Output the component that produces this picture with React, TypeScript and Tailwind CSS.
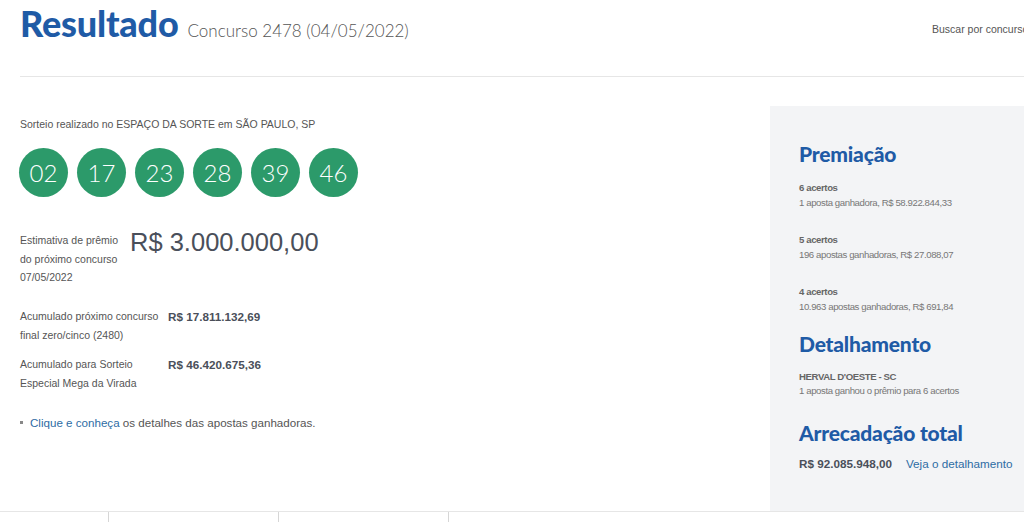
import React from 'react';

const numbers = ['02', '17', '23', '28', '39', '46'];

const faixas = [
  { titulo: '6 acertos', texto: '1 aposta ganhadora, R$ 58.922.844,33' },
  { titulo: '5 acertos', texto: '196 apostas ganhadoras, R$ 27.088,07' },
  { titulo: '4 acertos', texto: '10.963 apostas ganhadoras, R$ 691,84' },
];

const heading = "font-['Lato',sans-serif] font-black text-[#1f5ba6] tracking-[-0.2px]";

export default function App() {
  return (
    <div className="w-[1024px] h-[522px] overflow-hidden bg-white font-['Liberation_Sans',Arial,sans-serif] text-[#555]">
      {/* Header */}
      <div className="ml-[20px] h-[77px] border-b border-[#e6e6e6] flex items-start justify-between">
        <div className="flex items-baseline gap-[9px] pt-[1px]">
          <h1 className={`${heading} text-[36px] leading-[44px]`}>Resultado</h1>
          <span className="font-['Lato',sans-serif] font-light text-[17px] text-[#555]">
            Concurso 2478 (04/05/2022)
          </span>
        </div>
        <div className="pt-[22px] w-[92px] overflow-hidden whitespace-nowrap text-[10.5px] text-[#555]">
          Buscar por concurso
        </div>
      </div>

      {/* Main */}
      <div className="flex h-[434px]">
        <div className="flex-1 pl-[19px] pt-[40px]">
          <p className="pl-[1px] text-[10.5px] leading-[14px]">
            Sorteio realizado no ESPAÇO DA SORTE em SÃO PAULO, SP
          </p>
          <ul className="flex gap-[9px] mt-[17px]">
            {numbers.map((n) => (
              <li
                key={n}
                className="w-[49px] h-[49px] rounded-full bg-[#2c9a6a] text-white flex items-center justify-center font-['Lato',sans-serif] font-light text-[24px]"
              >
                {n}
              </li>
            ))}
          </ul>

          <div className="flex mt-[34px] pl-[1px]">
            <div className="w-[110px] text-[10.5px] leading-[18.5px]">
              Estimativa de prêmio
              <br />
              do próximo concurso
              <br />
              07/05/2022
            </div>
            <div className="text-[25.5px] leading-[28px] text-[#4a4f5a] -mt-[3px]">R$ 3.000.000,00</div>
          </div>

          <div className="flex mt-[20px] pl-[1px]">
            <div className="w-[148px] text-[10.5px] leading-[19px]">
              Acumulado próximo concurso
              <br />
              final zero/cinco (2480)
            </div>
            <div className="font-bold text-[11.7px] leading-[19px] text-[#4a4f5a]">R$ 17.811.132,69</div>
          </div>

          <div className="flex mt-[10px] pl-[1px]">
            <div className="w-[148px] text-[10.5px] leading-[19px]">
              Acumulado para Sorteio
              <br />
              Especial Mega da Virada
            </div>
            <div className="font-bold text-[11.7px] leading-[19px] text-[#4a4f5a]">R$ 46.420.675,36</div>
          </div>

          <ul className="mt-[22px] text-[11.6px] leading-[16px] flex">
            <li className="flex items-center gap-[7px]">
              <span className="w-[3px] h-[3px] ml-[1px] bg-[#888]" />
              <span>
                <a className="text-[#2e6ca4]">Clique e conheça</a> os detalhes das apostas ganhadoras.
              </span>
            </li>
          </ul>
        </div>

        {/* Sidebar */}
        <aside className="w-[254px] mt-[29px] bg-[#f3f4f6] pl-[29px] pt-[36px]">
          <h2 className={`${heading} text-[21px] leading-[24px]`}>Premiação</h2>
          <div className="mt-[14px] flex flex-col gap-[22px]">
            {faixas.map((f) => (
              <div key={f.titulo} className="text-[9.6px] leading-[15px] tracking-[-0.4px]">
                <div className="font-bold text-[#666]">{f.titulo}</div>
                <div className="text-[#777]">{f.texto}</div>
              </div>
            ))}
          </div>

          <h2 className={`${heading} text-[21px] leading-[24px] mt-[18px]`}>Detalhamento</h2>
          <div className="mt-[14px] text-[9.6px] leading-[14px] tracking-[-0.4px]">
            <div className="font-bold text-[#666]">HERVAL D'OESTE - SC</div>
            <div className="text-[#777]">1 aposta ganhou o prêmio para 6 acertos</div>
          </div>

          <h2 className={`${heading} text-[21px] leading-[24px] mt-[23px]`}>Arrecadação total</h2>
          <div className="mt-[10px] flex items-baseline gap-[14px]">
            <span className="font-bold text-[11.7px] text-[#4a4f5a]">R$ 92.085.948,00</span>
            <a className="text-[11.7px] text-[#2e6ca4]">Veja o detalhamento</a>
          </div>
        </aside>
      </div>

      {/* Tabs */}
      <div className="flex border-t border-[#e6e6e6] h-[11px]">
        <div className="w-[108px]" />
        <div className="w-[170px] border-l border-[#d6d6d6]" />
        <div className="w-[170px] border-l border-[#d6d6d6]" />
        <div className="w-[170px] border-l border-[#d6d6d6]" />
      </div>
    </div>
  );
}
